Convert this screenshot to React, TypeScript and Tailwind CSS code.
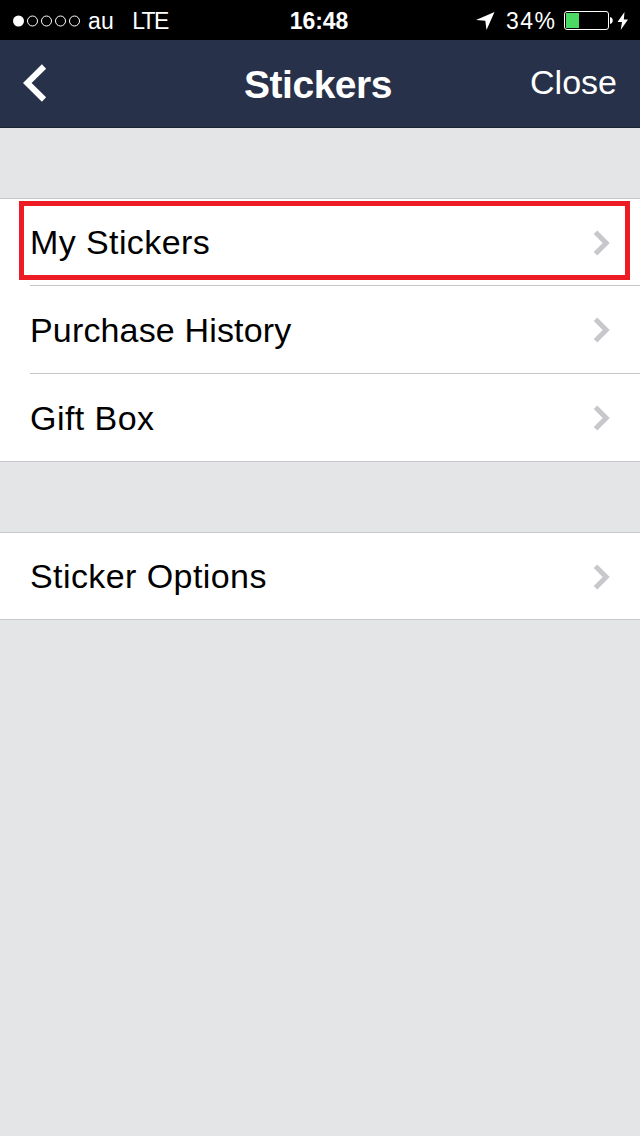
type MenuRow = {
  label: string;
  tracking: string;
  highlighted?: boolean;
};

const stickerRows: MenuRow[] = [
  { label: "My Stickers", tracking: "tracking-[0.4px]", highlighted: true },
  { label: "Purchase History", tracking: "tracking-[0.16px]" },
  { label: "Gift Box", tracking: "tracking-[0.45px]" },
];

const optionRows: MenuRow[] = [{ label: "Sticker Options", tracking: "tracking-[0.42px]" }];

function SignalDots() {
  return (
    <svg width="70" height="14" viewBox="0 0 70 14" fill="none" stroke="white" className="mt-px">
      <circle cx="6.5" cy="7" r="5.5" fill="white" stroke="none" />
      <circle cx="20.5" cy="7" r="5" />
      <circle cx="34.5" cy="7" r="5" />
      <circle cx="48.5" cy="7" r="5" />
      <circle cx="62.5" cy="7" r="5" />
    </svg>
  );
}

function StatusBar() {
  return (
    <div className="flex h-10 items-center bg-black text-[23px] leading-10 text-white">
      <div className="flex flex-1 items-center pl-3">
        <SignalDots />
        <span className="ml-[6px] pt-[2px] tracking-[0.3px]">au</span>
        <span className="ml-[18px] pt-[2px] tracking-[-1.7px]">LTE</span>
      </div>
      <span className="-ml-[3px] pt-[2px] font-bold tracking-[-0.1px]">16:48</span>
      <div className="flex flex-1 items-center justify-end pr-[11px]">
        <svg width="19" height="18" viewBox="0 0 19 18" fill="white" className="mt-[2px]">
          <path d="M18.5 0L10.5 18L9.3 8.8L0 8Z" />
        </svg>
        <span className="ml-[11px] w-[51px] pt-[2px] tracking-[1.4px]">34%</span>
        <svg width="50" height="20" viewBox="0 0 50 20" className="ml-[7px]">
          <rect x="0.5" y="1.5" width="44" height="18" rx="2.5" fill="none" stroke="white" />
          <rect x="2" y="3" width="13" height="15" fill="#4cd964" />
          <path d="M46 7C49.7 7.5 49.7 13.5 46 14Z" fill="white" />
        </svg>
        <svg width="12" height="18" viewBox="0 0 12 18" fill="white" className="ml-[3px] mt-px">
          <path d="M7.5 0L0.5 10H5L3.7 18L11 7.5H6.8Z" />
        </svg>
      </div>
    </div>
  );
}

function NavBar() {
  return (
    <header className="flex h-[88px] items-center border-b border-[#1b2334] bg-[#273149] text-white">
      <div className="flex-1 pl-[23px]">
        <svg width="24" height="38" viewBox="0 0 24 38" fill="none" stroke="white" strokeWidth="6" className="mb-px">
          <path d="M21 2.5L4.2 19L21 35.5" />
        </svg>
      </div>
      <h1 className="-ml-[4px] pt-[3px] text-[39px] font-bold tracking-[-0.5px]">Stickers</h1>
      <div className="flex-1 pb-[3px] pr-[23px] text-right text-[34px] leading-[40px]">
        <span>Close</span>
      </div>
    </header>
  );
}

function Chevron() {
  return (
    <svg width="17" height="26" viewBox="0 0 17 26" fill="none" stroke="#c7c7cc" strokeWidth="5" className="mt-px">
      <path d="M2.5 2.2L13.2 13L2.5 23.8" />
    </svg>
  );
}

function MenuList({ rows }: { rows: MenuRow[] }) {
  return (
    <ul className="border-y border-[#c8c7cc] bg-white">
      {rows.map((row, i) => (
        <li key={row.label} className="relative pl-[30px]">
          <div
            className={`flex items-center justify-between pr-[30px] ${
              i === 0 ? "h-[86px]" : "h-[88px] border-t border-[#c8c7cc]"
            }`}
          >
            <span className={`text-[34px] leading-[40px] ${row.tracking}`}>{row.label}</span>
            <Chevron />
          </div>
          {row.highlighted && (
            <div className="absolute left-[19px] right-[10px] top-[2px] h-[79px] border-[5px] border-[#ed1c24]" />
          )}
        </li>
      ))}
    </ul>
  );
}

export default function App() {
  return (
    <div className="min-h-screen w-[640px] bg-[#e4e5e7] font-['Liberation_Sans',Arial,sans-serif] text-black">
      <StatusBar />
      <NavBar />
      <main className="flex flex-col gap-[70px] pt-[70px]">
        <MenuList rows={stickerRows} />
        <MenuList rows={optionRows} />
      </main>
    </div>
  );
}
